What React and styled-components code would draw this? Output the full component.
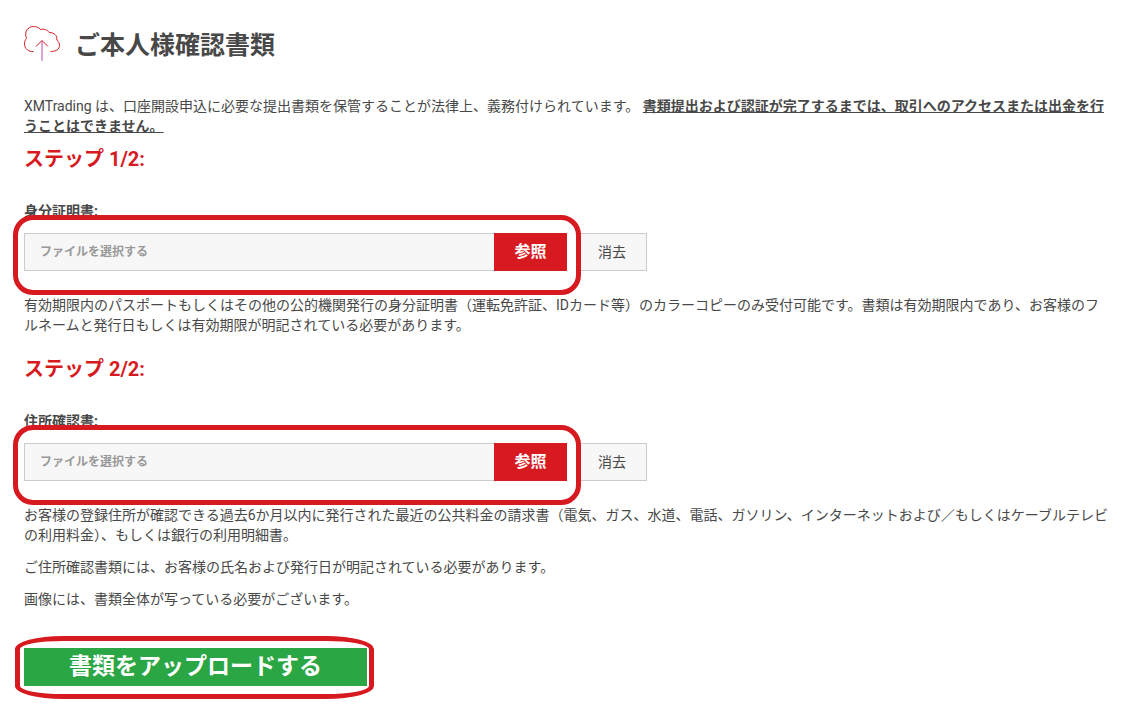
import React, { useId, useRef, useState } from 'react';
import styled, { createGlobalStyle, ThemeProvider } from 'styled-components';

const theme = {
  red: '#d71920',
  green: '#2ba644',
  text: '#484848',
  line: '#cccccc',
  field: '#f7f7f7',
};

const FileField = ({ title }) => {
  const id = useId();
  const fileRef = useRef(null);
  const [fileName, setFileName] = useState('');

  const clearFile = () => {
    fileRef.current.value = '';
    setFileName('');
  };

  return (
    <FieldGroup>
      <FieldLabel htmlFor={id}>{title}</FieldLabel>
      <FieldRow>
        <Picker>
          <FileName
            id={id}
            type="text"
            placeholder="ファイルを選択する"
            value={fileName}
            readOnly
          />
          <BrowseButton type="button" onClick={() => fileRef.current.click()}>
            参照
          </BrowseButton>
          <input
            ref={fileRef}
            type="file"
            hidden
            onChange={e => setFileName(e.target.files[0]?.name ?? '')}
          />
        </Picker>
        <ClearButton type="button" onClick={clearFile}>
          消去
        </ClearButton>
      </FieldRow>
    </FieldGroup>
  );
};

const App = () => {
  return (
    <ThemeProvider theme={theme}>
      <GlobalStyle />
      <Page onSubmit={e => e.preventDefault()}>
        <Header>
          <CloudIcon viewBox="0 0 37 37" aria-hidden="true">
            <path d="M9.5 26.5C4.5 27 .5 23.5 .5 19C.5 16.5 1.2 14.8 2.5 13.5C0 7 3.5 1.5 9.5 1.5C12.5 1.5 15 2.5 16.5 4.5C20 3.5 23.5 5 25.3 7.5C30 7.5 33.5 10.5 32.8 15C34.8 16.5 35.5 18.5 35.5 20.5C35.5 24 32.5 26.5 26.5 26.5" />
            <CloudArrow d="M18 36V16" />
            <path d="M12 21.5L18 15.5L24 21.5" />
          </CloudIcon>
          <Title>ご本人様確認書類</Title>
        </Header>

        <Text>
          XMTrading は、口座開設申込に必要な提出書類を保管することが法律上、義務付けられています。{' '}
          <Notice>
            書類提出および認証が完了するまでは、取引へのアクセスまたは出金を行うことはできません。
          </Notice>
        </Text>

        <StepTitle>ステップ 1/2:</StepTitle>
        <FileField title="身分証明書:" />
        <Text>
          有効期限内のパスポートもしくはその他の公的機関発行の身分証明書（運転免許証、IDカード等）のカラーコピーのみ受付可能です。書類は有効期限内であり、お客様のフルネームと発行日もしくは有効期限が明記されている必要があります。
        </Text>

        <StepTitle $spaced>ステップ 2/2:</StepTitle>
        <FileField title="住所確認書:" />
        <Text>
          お客様の登録住所が確認できる過去6か月以内に発行された最近の公共料金の請求書（電気、ガス、水道、電話、ガソリン、インターネットおよび／もしくはケーブルテレビの利用料金）、もしくは銀行の利用明細書。
        </Text>
        <Text>
          ご住所確認書類には、お客様の氏名および発行日が明記されている必要があります。
        </Text>
        <Text>画像には、書類全体が写っている必要がございます。</Text>

        <SubmitBox>
          <SubmitButton type="submit">書類をアップロードする</SubmitButton>
        </SubmitBox>
      </Page>
    </ThemeProvider>
  );
};

export default App;

const GlobalStyle = createGlobalStyle`
  * {
    box-sizing: border-box;
  }

  body {
    margin: 0;
    background: #ffffff;
    color: ${theme.text};
  }

  body, input, button {
    font-family: Roboto, 'Noto Sans CJK JP', sans-serif;
    font-size: 14px;
    line-height: 20px;
  }
`;

const Page = styled.form`
  padding: 25px 27px 24px 24px;
`;

const Header = styled.header`
  display: flex;
  align-items: flex-end;
  gap: 14px;
  margin-bottom: 34px;
`;

const CloudIcon = styled.svg`
  width: 37px;
  height: 37px;
  flex: none;
  fill: none;
  stroke: ${({ theme }) => theme.red};
  stroke-width: 1;
`;

const CloudArrow = styled.path`
  stroke: #b84bb0;
`;

const Title = styled.h1`
  margin: 0;
  font-size: 25px;
  line-height: 32px;
  font-weight: bold;
`;

const Text = styled.p`
  margin: 0;

  & + & {
    margin-top: 12px;
  }
`;

const Notice = styled.strong`
  text-decoration: underline;
`;

const StepTitle = styled.h2`
  margin: ${({ $spaced }) => ($spaced ? '20px' : '9px')} 0 0;
  color: ${({ theme }) => theme.red};
  font-size: 20px;
  line-height: 28px;
  font-weight: bold;
`;

const FieldGroup = styled.div`
  margin: 28px 0 24px;
`;

const FieldLabel = styled.label`
  display: block;
  margin-bottom: 12px;
  font-weight: bold;
`;

const FieldRow = styled.div`
  display: flex;
  gap: 10px;
`;

const Picker = styled.div`
  position: relative;
  display: flex;
  width: 50%;
  height: 38px;

  &::after {
    content: '';
    position: absolute;
    inset: -18px -14px -24px -11px;
    border: 5px solid ${({ theme }) => theme.red};
    border-radius: 20px;
    pointer-events: none;
  }
`;

const FileName = styled.input`
  flex: 1;
  min-width: 0;
  padding: 0 15px;
  border: 1px solid ${({ theme }) => theme.line};
  border-right: 0;
  border-radius: 0;
  background: ${({ theme }) => theme.field};
  font-size: 12px;
  font-weight: bold;

  &::placeholder {
    color: #999999;
  }
`;

const BrowseButton = styled.button`
  width: 73px;
  padding: 0;
  border: 0;
  background: ${({ theme }) => theme.red};
  color: #ffffff;
  font-size: 16px;
  font-weight: bold;
  cursor: pointer;
`;

const ClearButton = styled.button`
  width: 70px;
  height: 38px;
  padding: 0;
  border: 1px solid ${({ theme }) => theme.line};
  background: ${({ theme }) => theme.field};
  color: ${({ theme }) => theme.text};
  cursor: pointer;
`;

const SubmitBox = styled.div`
  position: relative;
  width: fit-content;
  margin-top: 39px;

  &::after {
    content: '';
    position: absolute;
    inset: -12px -7px -13px -9px;
    border: 5px solid ${({ theme }) => theme.red};
    border-radius: 48px / 13px;
    pointer-events: none;
  }
`;

const SubmitButton = styled.button`
  display: block;
  height: 38px;
  padding: 0 45px;
  border: 0;
  background: ${({ theme }) => theme.green};
  color: #ffffff;
  font-size: 23px;
  font-weight: bold;
  cursor: pointer;
`;
